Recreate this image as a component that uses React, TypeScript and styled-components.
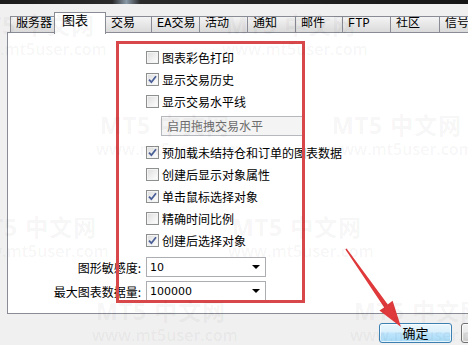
import React from 'react';
import styled, { createGlobalStyle } from 'styled-components';

const GlobalStyle = createGlobalStyle`
  html, body {
    margin: 0;
    padding: 0;
    background: #f0f0f0;
  }
  body {
    font-family: "Noto Sans CJK SC", "Noto Sans", sans-serif;
    font-size: 12px;
    color: #000;
  }
`;

const Window = styled.div`
  position: relative;
  width: 468px;
  height: 345px;
  overflow: hidden;
  background: #f0f0f0;
`;

const TopBar = styled.div`
  height: 4px;
  background: linear-gradient(90deg, #1b1b1b 0%, #2a2a2a 24%, #8a9aa8 27%, #2a2a2a 30%, #161616 100%);
`;

const TabStrip = styled.div`
  display: flex;
  align-items: flex-end;
  height: 29px;
  padding-left: 11px;
  position: relative;
  z-index: 2;
`;

const Tab = styled.div<{ $w: number; $active?: boolean }>`
  box-sizing: border-box;
  flex: none;
  width: ${p => p.$w}px;
  height: ${p => (p.$active ? 22 : 17)}px;
  margin-bottom: ${p => (p.$active ? -1 : 0)}px;
  margin-left: -1px;
  padding-left: ${p => (p.$active ? 7 : 5)}px;
  border: 1px solid #898c95;
  border-bottom: ${p => (p.$active ? 'none' : '1px solid #898c95')};
  background: ${p =>
    p.$active ? '#ffffff' : 'linear-gradient(#f4f4f4 0%, #e8e8e8 45%, #dadada 100%)'};
  font-family: "Liberation Mono", "Noto Sans CJK SC", monospace;
  font-size: ${p => (p.$active ? 13 : 12)}px;
  line-height: ${p => (p.$active ? 18 : 15)}px;
  white-space: nowrap;
  overflow: hidden;
  position: relative;
  z-index: ${p => (p.$active ? 2 : 1)};
`;

const Panel = styled.div`
  box-sizing: border-box;
  margin-left: 7px;
  margin-top: -1px;
  width: 480px;
  height: 282px;
  border: 1px solid #898c95;
  background: #ffffff;
  padding: 13px 0 0 138px;
  position: relative;
  z-index: 1;
`;

const OptionList = styled.div`
  display: flex;
  flex-direction: column;
`;

const OptionRow = styled.label`
  display: flex;
  align-items: center;
  gap: 3px;
  height: 22px;
  white-space: nowrap;
`;

const Box = styled.span`
  box-sizing: border-box;
  flex: none;
  width: 13px;
  height: 13px;
  border: 1px solid #8e8f8f;
  background: linear-gradient(135deg, #dcdcdc 0%, #f2f2f2 60%, #ffffff 100%);
  box-shadow: inset 0 0 0 1px #f4f4f4;
  display: flex;
  align-items: center;
  justify-content: center;
`;

const DisabledField = styled.div`
  box-sizing: border-box;
  margin: 4px 0 5px 15px;
  width: 143px;
  height: 20px;
  border: 1px solid #b5b9bd;
  background: #f4f4f4;
  color: #6d6d6d;
  padding-left: 5px;
  line-height: 18px;
  white-space: nowrap;
`;

const SettingGrid = styled.div`
  display: grid;
  grid-template-columns: 133px 120px;
  column-gap: 5px;
  row-gap: 4px;
  margin: 6px 0 0 -138px;
  align-items: center;
`;

const SettingLabel = styled.div`
  text-align: right;
  white-space: nowrap;
`;

const Select = styled.div`
  box-sizing: border-box;
  height: 20px;
  border: 1px solid #abadb3;
  background: #fff;
  display: flex;
  align-items: center;
  justify-content: space-between;
  padding: 0 4px 0 3px;
  font-family: "DejaVu Sans", "Noto Sans CJK SC", sans-serif;
  font-size: 11px;
`;

const Caret = styled.span`
  width: 0;
  height: 0;
  border-left: 4px solid transparent;
  border-right: 4px solid transparent;
  border-top: 4px solid #000;
  margin-right: 1px;
`;

const Footer = styled.div`
  display: flex;
  gap: 9px;
  padding: 9px 0 0 379px;
`;

const Button = styled.div<{ $focus?: boolean }>`
  box-sizing: border-box;
  flex: none;
  width: 73px;
  height: 20px;
  border: 1px solid ${p => (p.$focus ? '#3c7fb1' : '#707070')};
  border-radius: 3px;
  background: ${p =>
    p.$focus
      ? 'linear-gradient(#eaf6fd 0%, #d9f0fc 45%, #bee6fd 50%, #a7d9f5 100%)'
      : 'linear-gradient(#f2f2f2 0%, #ebebeb 45%, #dddddd 50%, #cfcfcf 100%)'};
  box-shadow: inset 0 0 0 1px rgba(255, 255, 255, 0.7);
  text-align: center;
  line-height: 18px;
  font-size: 13px;
`;

const Highlight = styled.div`
  position: absolute;
  left: 116px;
  top: 41px;
  width: 189px;
  height: 262px;
  box-sizing: border-box;
  border: 3px solid #d8484b;
  z-index: 5;
  pointer-events: none;
`;

const Overlay = styled.svg`
  position: absolute;
  left: 0;
  top: 0;
  z-index: 6;
  pointer-events: none;
`;

const Watermark = styled.div`
  position: absolute;
  z-index: 7;
  pointer-events: none;
  font-family: "Open Sans", "Noto Sans CJK SC", sans-serif;
  color: rgba(0, 0, 0, 0.05);
  white-space: nowrap;
  line-height: 1;
`;

const MarkTitle = styled.div`
  font-size: 23px;
  font-weight: 700;
  letter-spacing: 1px;
`;

const MarkUrl = styled.div`
  font-size: 16px;
  font-weight: 600;
  margin-top: 4px;
  margin-left: -4px;
`;

const tabs = [
  { label: '服务器', w: 45 },
  { label: '图表', w: 52, active: true },
  { label: '交易', w: 47 },
  { label: 'EA交易', w: 49 },
  { label: '活动', w: 49 },
  { label: '通知', w: 49 },
  { label: '邮件', w: 48 },
  { label: 'FTP', w: 49 },
  { label: '社区', w: 50 },
  { label: '信号', w: 50 },
];

const optionsTop = [
  { label: '图表彩色打印', checked: false },
  { label: '显示交易历史', checked: true },
  { label: '显示交易水平线', checked: false },
];

const optionsBottom = [
  { label: '预加载未结持仓和订单的图表数据', checked: true },
  { label: '创建后显示对象属性', checked: false },
  { label: '单击鼠标选择对象', checked: true },
  { label: '精确时间比例', checked: false },
  { label: '创建后选择对象', checked: true },
];

const marks = [
  { x: -35, y: 14 },
  { x: 226, y: 14 },
  { x: 100, y: 114 },
  { x: 332, y: 114 },
  { x: -33, y: 216 },
  { x: 232, y: 216 },
  { x: 96, y: 300 },
  { x: 354, y: 300 },
];

const Checkbox: React.FC<{ checked: boolean }> = ({ checked }) => (
  <Box>
    {checked && (
      <svg width="9" height="9" viewBox="0 0 9 9">
        <path d="M1 4.6 L3.4 7.2 L8 1.2" fill="none" stroke="#4a5f97" strokeWidth="1.8" />
      </svg>
    )}
  </Box>
);

const Option: React.FC<{ label: string; checked: boolean }> = ({ label, checked }) => (
  <OptionRow>
    <Checkbox checked={checked} />
    {label}
  </OptionRow>
);

export default function App() {
  return (
    <>
      <GlobalStyle />
      <Window>
        <TopBar />
        <TabStrip>
          {tabs.map(t => (
            <Tab key={t.label} $w={t.w} $active={t.active}>
              {t.label}
            </Tab>
          ))}
        </TabStrip>

        <Panel>
          <OptionList>
            {optionsTop.map(o => (
              <Option key={o.label} {...o} />
            ))}
            <DisabledField>启用拖拽交易水平</DisabledField>
            {optionsBottom.map(o => (
              <Option key={o.label} {...o} />
            ))}
          </OptionList>

          <SettingGrid>
            <SettingLabel>图形敏感度:</SettingLabel>
            <Select>
              10
              <Caret />
            </Select>
            <SettingLabel>最大图表数据量:</SettingLabel>
            <Select>
              100000
              <Caret />
            </Select>
          </SettingGrid>
        </Panel>

        <Footer>
          <Button $focus>确定</Button>
          <Button />
        </Footer>

        <Highlight />

        <Overlay width="468" height="345" viewBox="0 0 468 345">
          <polygon
            points="345.4,249.4 384.2,307.4 379.4,310.6 401,327 392.6,300.8 387.8,304.4 346.6,248.6"
            fill="#e0393b"
          />
        </Overlay>

        {marks.map((m, i) => (
          <Watermark key={i} style={{ left: m.x, top: m.y }}>
            <MarkTitle>MT5 中文网</MarkTitle>
            <MarkUrl>www.mt5user.com</MarkUrl>
          </Watermark>
        ))}
      </Window>
    </>
  );
}
